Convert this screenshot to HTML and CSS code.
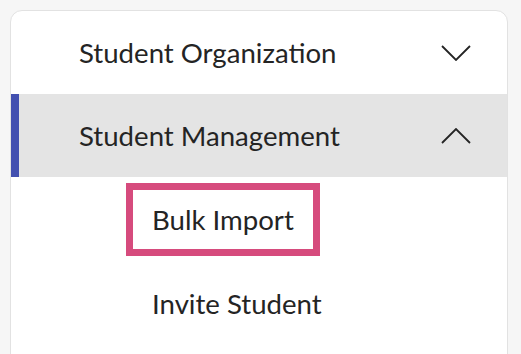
FILE: index.html
```html
<!DOCTYPE html>
<html lang="en">

<head>
  <meta charset="UTF-8" />
  <meta name="viewport" content="width=device-width, initial-scale=1.0" />
  <title>Student Menu</title>
  <link rel="stylesheet" href="styles.css">
</head>

<body>
  <div class="menu">
    <div class="menu-item">
      <span>Student Organization</span>
      <svg class="chevron" width="30" height="16" viewBox="0 0 30 16">
        <polyline points="1,1 15,15 29,1" />
      </svg>
    </div>
    <div class="menu-item active">
      <span>Student Management</span>
      <svg class="chevron" width="30" height="16" viewBox="0 0 30 16">
        <polyline points="1,15 15,1 29,15" />
      </svg>
    </div>
    <div class="sub-menu">
      <div class="sub-row"><a class="sub-item selected" href="#">Bulk Import</a></div>
      <div class="sub-row"><a class="sub-item" href="#">Invite Student</a></div>
    </div>
  </div>
</body>

</html>
```

FILE: styles.css
```css
html,
body {
  height: 100%;
}

body {
  margin: 0;
  padding: 10px 13px 0 10px;
  box-sizing: border-box;
  background: #f6f6f6;
  font-family: Lato, "Open Sans", sans-serif;
  color: #242424;
  overflow: hidden;
}

.menu {
  background: #fff;
  border: 1px solid #e2e2e2;
  border-radius: 12px;
  min-height: 420px;
}

.menu-item {
  height: 83px;
  display: flex;
  align-items: center;
  justify-content: space-between;
  padding: 0 36px 0 60px;
  font-size: 27.6px;
  border-left: 8px solid transparent;
}

.menu-item.active {
  background: #e4e4e4;
  border-left-color: #4350b0;
}

.chevron {
  fill: none;
  stroke: #242424;
  stroke-width: 1.8;
}

.sub-row {
  height: 84px;
  display: flex;
  align-items: center;
  padding-left: 115px;
}

.sub-item {
  display: flex;
  align-items: center;
  height: 59px;
  padding: 0 19px;
  border: 7px solid transparent;
  font-size: 27.6px;
  color: #242424;
  text-decoration: none;
}

.sub-item.selected {
  border-color: #d64b7d;
}
```
